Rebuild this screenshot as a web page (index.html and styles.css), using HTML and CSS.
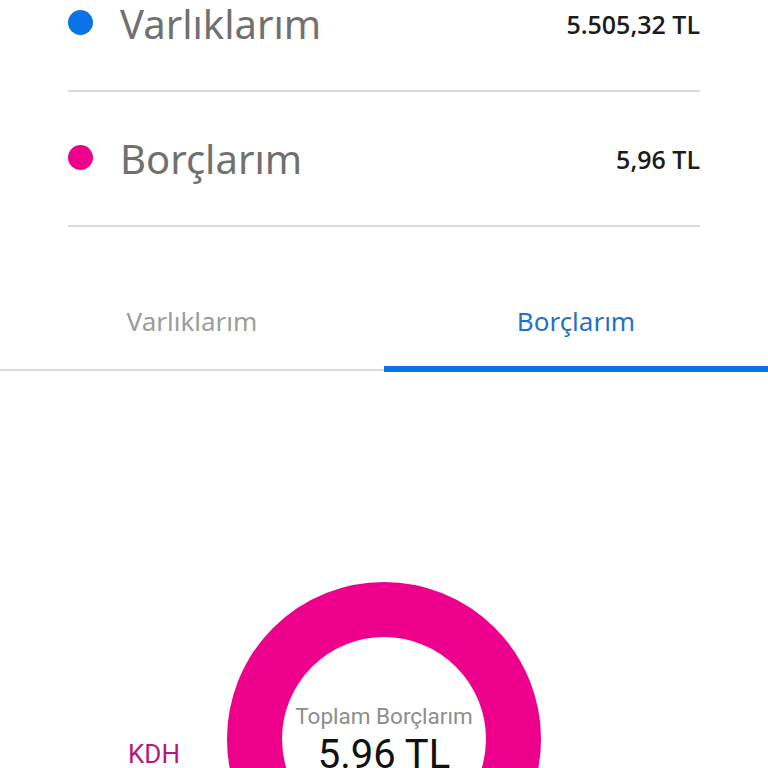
FILE: index.html
```html
<!DOCTYPE html>
<html lang="tr">

<head>
    <meta charset="UTF-8">
    <meta name="viewport" content="width=device-width, initial-scale=1.0">
    <title>Borçlarım</title>
    <link rel="stylesheet" href="styles.css">
</head>

<body>
    <div class="page">
        <!-- özet listesi -->
        <ul class="summary">
            <li class="summary_row">
                <span class="dot dot_blue"></span>
                <span class="summary_label">Varlıklarım</span>
                <span class="summary_amount">5.505,32 TL</span>
            </li>
            <li class="summary_row">
                <span class="dot dot_pink"></span>
                <span class="summary_label">Borçlarım</span>
                <span class="summary_amount">5,96 TL</span>
            </li>
        </ul>
        <!-- sekmeler -->
        <div class="tabs">
            <div class="tab">Varlıklarım</div>
            <div class="tab active">Borçlarım</div>
        </div>
        <!-- grafik -->
        <div class="chart">
            <div class="legend">KDH</div>
            <div class="donut">
                <div class="donut_title">Toplam Borçlarım</div>
                <div class="donut_total">5.96 TL</div>
            </div>
            <div></div>
        </div>
    </div>
</body>

</html>
```

FILE: styles.css
```css
body,html,ul,li {
    margin: 0;
    padding: 0;
}
body {
    background-color: #ffffff;
    overflow: hidden;
}
.page {
    width: 768px;
    height: 768px;
    overflow: hidden;
}
.summary {
    list-style: none;
    margin: -43px 68px 0 68px;
}
.summary_row {
    display: flex;
    align-items: center;
    height: 133px;
    border-bottom: 2px solid #dadada;
}
.dot {
    width: 25px;
    height: 25px;
    border-radius: 50%;
    margin-right: 27px;
    margin-top: -2px;
}
.dot_blue {
    background-color: #0a73e6;
}
.dot_pink {
    background-color: #ec008c;
}
.summary_label {
    font: normal 400 40px/1 'Noto Sans', sans-serif;
    color: #707070;
}
.summary_amount {
    margin-left: auto;
    margin-top: 2px;
    font: normal 600 25px/1 'Open Sans', sans-serif;
    color: #1c1c1c;
}
.tabs {
    display: flex;
    align-items: flex-start;
}
.tab {
    flex: 1;
    box-sizing: border-box;
    height: 144px;
    margin-bottom: 1px;
    padding-top: 81px;
    text-align: center;
    font: normal 400 26px/1 'Noto Sans', sans-serif;
    color: #9c9c9c;
    border-bottom: 2px solid #d9d9d9;
}
.tab.active {
    height: 145px;
    margin-bottom: 0;
    color: #1f73c9;
    border-bottom: 6px solid #0a73e6;
}
.chart {
    display: grid;
    grid-template-columns: 227px 314px 1fr;
    padding-top: 210px;
}
.legend {
    margin-top: 159px;
    padding-left: 128px;
    font: normal 400 26px/1 Roboto, sans-serif;
    color: #b5197a;
}
.donut {
    box-sizing: border-box;
    width: 314px;
    height: 314px;
    border: 55px solid #ec008c;
    border-radius: 50%;
    padding-top: 68px;
    text-align: center;
}
.donut_title {
    font: normal 400 22.5px/1 Roboto, sans-serif;
    color: #8d8d8d;
}
.donut_total {
    margin-top: 7px;
    font: normal 400 40px/1 Roboto, sans-serif;
    color: #111111;
}
```
